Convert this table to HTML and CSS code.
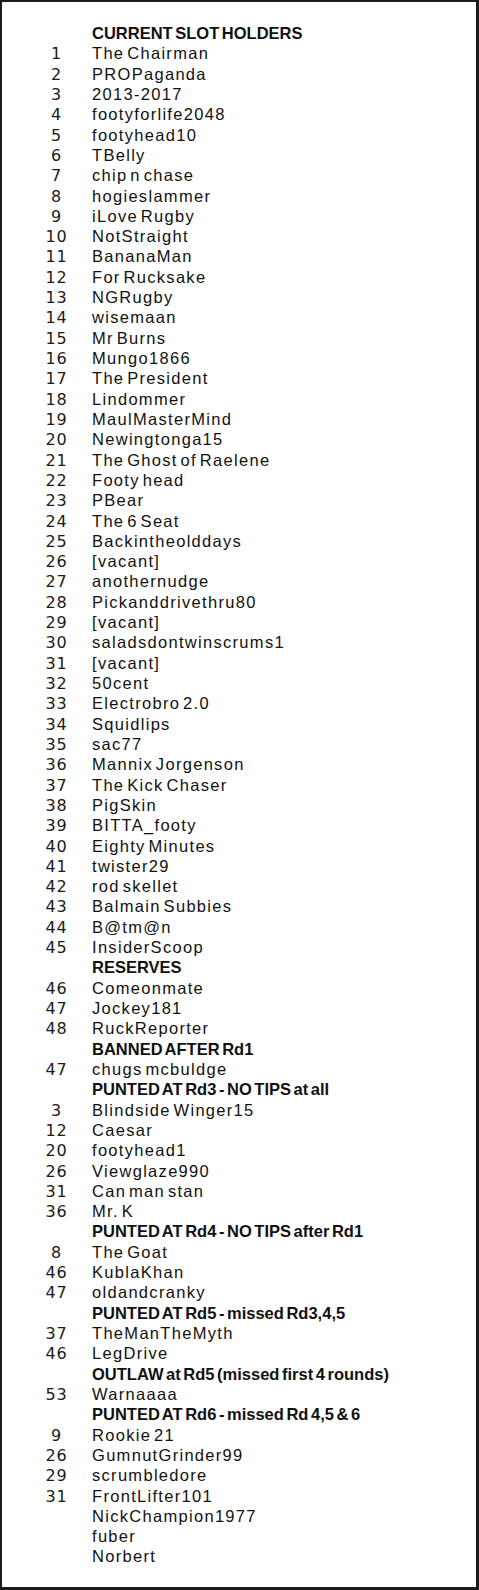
FILE: index.html
```html
<!DOCTYPE html>
<html>
<head>
<meta charset="utf-8">
<link rel="stylesheet" href="styles.css">
</head>
<body>
<div class="sheet">
  <div class="row head"><span class="num"></span><span class="name">CURRENT SLOT HOLDERS</span></div>
  <div class="row"><span class="num">1</span><span class="name">The Chairman</span></div>
  <div class="row"><span class="num">2</span><span class="name">PROPaganda</span></div>
  <div class="row"><span class="num">3</span><span class="name">2013-2017</span></div>
  <div class="row"><span class="num">4</span><span class="name">footyforlife2048</span></div>
  <div class="row"><span class="num">5</span><span class="name">footyhead10</span></div>
  <div class="row"><span class="num">6</span><span class="name">TBelly</span></div>
  <div class="row"><span class="num">7</span><span class="name">chip n chase</span></div>
  <div class="row"><span class="num">8</span><span class="name">hogieslammer</span></div>
  <div class="row"><span class="num">9</span><span class="name">iLove Rugby</span></div>
  <div class="row"><span class="num">10</span><span class="name">NotStraight</span></div>
  <div class="row"><span class="num">11</span><span class="name">BananaMan</span></div>
  <div class="row"><span class="num">12</span><span class="name">For Rucksake</span></div>
  <div class="row"><span class="num">13</span><span class="name">NGRugby</span></div>
  <div class="row"><span class="num">14</span><span class="name">wisemaan</span></div>
  <div class="row"><span class="num">15</span><span class="name">Mr Burns</span></div>
  <div class="row"><span class="num">16</span><span class="name">Mungo1866</span></div>
  <div class="row"><span class="num">17</span><span class="name">The President</span></div>
  <div class="row"><span class="num">18</span><span class="name">Lindommer</span></div>
  <div class="row"><span class="num">19</span><span class="name">MaulMasterMind</span></div>
  <div class="row"><span class="num">20</span><span class="name">Newingtonga15</span></div>
  <div class="row"><span class="num">21</span><span class="name">The Ghost of Raelene</span></div>
  <div class="row"><span class="num">22</span><span class="name">Footy head</span></div>
  <div class="row"><span class="num">23</span><span class="name">PBear</span></div>
  <div class="row"><span class="num">24</span><span class="name">The 6 Seat</span></div>
  <div class="row"><span class="num">25</span><span class="name">Backintheolddays</span></div>
  <div class="row"><span class="num">26</span><span class="name">[vacant]</span></div>
  <div class="row"><span class="num">27</span><span class="name">anothernudge</span></div>
  <div class="row"><span class="num">28</span><span class="name">Pickanddrivethru80</span></div>
  <div class="row"><span class="num">29</span><span class="name">[vacant]</span></div>
  <div class="row"><span class="num">30</span><span class="name">saladsdontwinscrums1</span></div>
  <div class="row"><span class="num">31</span><span class="name">[vacant]</span></div>
  <div class="row"><span class="num">32</span><span class="name">50cent</span></div>
  <div class="row"><span class="num">33</span><span class="name">Electrobro 2.0</span></div>
  <div class="row"><span class="num">34</span><span class="name">Squidlips</span></div>
  <div class="row"><span class="num">35</span><span class="name">sac77</span></div>
  <div class="row"><span class="num">36</span><span class="name">Mannix Jorgenson</span></div>
  <div class="row"><span class="num">37</span><span class="name">The Kick Chaser</span></div>
  <div class="row"><span class="num">38</span><span class="name">PigSkin</span></div>
  <div class="row"><span class="num">39</span><span class="name">BITTA_footy</span></div>
  <div class="row"><span class="num">40</span><span class="name">Eighty Minutes</span></div>
  <div class="row"><span class="num">41</span><span class="name">twister29</span></div>
  <div class="row"><span class="num">42</span><span class="name">rod skellet</span></div>
  <div class="row"><span class="num">43</span><span class="name">Balmain Subbies</span></div>
  <div class="row"><span class="num">44</span><span class="name">B@tm@n</span></div>
  <div class="row"><span class="num">45</span><span class="name">InsiderScoop</span></div>
  <div class="row head"><span class="num"></span><span class="name">RESERVES</span></div>
  <div class="row"><span class="num">46</span><span class="name">Comeonmate</span></div>
  <div class="row"><span class="num">47</span><span class="name">Jockey181</span></div>
  <div class="row"><span class="num">48</span><span class="name">RuckReporter</span></div>
  <div class="row head"><span class="num"></span><span class="name">BANNED AFTER Rd1</span></div>
  <div class="row"><span class="num">47</span><span class="name">chugs mcbuldge</span></div>
  <div class="row head"><span class="num"></span><span class="name">PUNTED AT Rd3 - NO TIPS at all</span></div>
  <div class="row"><span class="num">3</span><span class="name">Blindside Winger15</span></div>
  <div class="row"><span class="num">12</span><span class="name">Caesar</span></div>
  <div class="row"><span class="num">20</span><span class="name">footyhead1</span></div>
  <div class="row"><span class="num">26</span><span class="name">Viewglaze990</span></div>
  <div class="row"><span class="num">31</span><span class="name">Can man stan</span></div>
  <div class="row"><span class="num">36</span><span class="name">Mr. K</span></div>
  <div class="row head"><span class="num"></span><span class="name">PUNTED AT Rd4 - NO TIPS after Rd1</span></div>
  <div class="row"><span class="num">8</span><span class="name">The Goat</span></div>
  <div class="row"><span class="num">46</span><span class="name">KublaKhan</span></div>
  <div class="row"><span class="num">47</span><span class="name">oldandcranky</span></div>
  <div class="row head"><span class="num"></span><span class="name">PUNTED AT Rd5 - missed Rd3,4,5</span></div>
  <div class="row"><span class="num">37</span><span class="name">TheManTheMyth</span></div>
  <div class="row"><span class="num">46</span><span class="name">LegDrive</span></div>
  <div class="row head"><span class="num"></span><span class="name">OUTLAW at Rd5 (missed first 4 rounds)</span></div>
  <div class="row"><span class="num">53</span><span class="name">Warnaaaa</span></div>
  <div class="row head"><span class="num"></span><span class="name">PUNTED AT Rd6 - missed Rd 4,5 &amp; 6</span></div>
  <div class="row"><span class="num">9</span><span class="name">Rookie 21</span></div>
  <div class="row"><span class="num">26</span><span class="name">GumnutGrinder99</span></div>
  <div class="row"><span class="num">29</span><span class="name">scrumbledore</span></div>
  <div class="row"><span class="num">31</span><span class="name">FrontLifter101</span></div>
  <div class="row"><span class="num"></span><span class="name">NickChampion1977</span></div>
  <div class="row"><span class="num"></span><span class="name">fuber</span></div>
  <div class="row"><span class="num"></span><span class="name">Norbert</span></div>
</div>
</body>
</html>
```

FILE: styles.css
```css
html, body {
  margin: 0;
  padding: 0;
  background: #ffffff;
}
.sheet {
  box-sizing: border-box;
  width: 479px;
  height: 1590px;
  border-style: solid;
  border-color: #1c1c1c;
  border-width: 2px 3px 3px 2px;
  padding-top: 21px;
  font-family: "Liberation Sans", Arial, sans-serif;
  font-size: 16.5px;
  line-height: 20.32px;
  color: #111111;
}
.row {
  display: flex;
  align-items: baseline;
  height: 20.32px;
  white-space: nowrap;
}
.num {
  width: 42px;
  margin-left: 33px;
  margin-right: 15px;
  text-align: center;
  font-family: "DejaVu Sans", "Liberation Sans", sans-serif;
  font-size: 16px;
  letter-spacing: 0.8px;
  text-indent: 0.8px;
  color: #1a1a1a;
}
.name {
  letter-spacing: 1.3px;
  word-spacing: -3px;
}
.head .name {
  font-weight: bold;
  letter-spacing: 0;
  word-spacing: -2px;
}
```
